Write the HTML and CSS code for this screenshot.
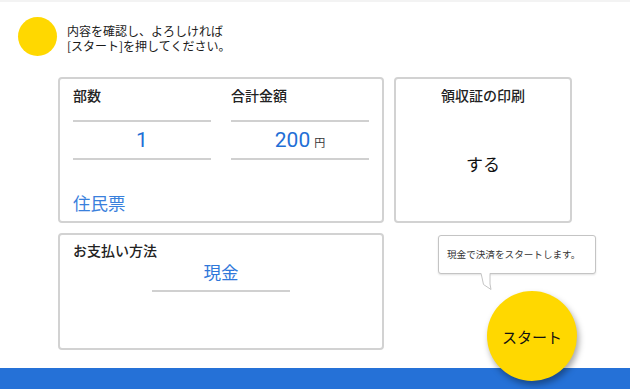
FILE: index.html
```html
<!DOCTYPE html>
<html lang="ja">
<head>
    <meta charset="UTF-8">
    <meta name="viewport" content="width=device-width, initial-scale=1.0">
    <title>確認</title>
    <link rel="stylesheet" href="styles.css">
</head>
<body>
    <div class="header">
        <div class="dot"></div>
        <p class="guide">内容を確認し、よろしければ<br>[スタート]を押してください。</p>
    </div>

    <div class="main">
        <div class="card card-order">
            <div class="field">
                <div class="label">部数</div>
                <div class="value">1</div>
            </div>
            <div class="field">
                <div class="label">合計金額</div>
                <div class="value">200<span class="unit">円</span></div>
            </div>
            <div class="doc-name">住民票</div>
        </div>

        <div class="card card-receipt">
            <div class="label">領収証の印刷</div>
            <div class="receipt-value">する</div>
        </div>

        <div class="card card-pay">
            <div class="label">お支払い方法</div>
            <div class="pay-value">現金</div>
        </div>

        <div class="action">
            <div class="bubble">
                現金で決済をスタートします。
                <svg class="tail" width="14" height="18" viewBox="0 0 14 18">
                    <path d="M1 0 L3.5 11.5 L11 16.5 L10 11 L10 0" fill="#fff" stroke="#c4c4c4" stroke-width="1"/>
                    <rect x="1.6" y="0" width="7.8" height="1.2" fill="#fff"/>
                </svg>
            </div>
            <button class="start-btn">スタート</button>
        </div>
    </div>

    <div class="footer"></div>
</body>
</html>
```

FILE: styles.css
```css
* {
    box-sizing: border-box;
    margin: 0;
    padding: 0;
}

body {
    width: 630px;
    height: 389px;
    overflow: hidden;
    background-color: #fff;
    color: #222;
    font-family: 'Noto Sans CJK JP', 'Noto Sans', sans-serif;
}

.header {
    display: flex;
    align-items: flex-start;
    gap: 10px;
    padding: 17px 0 0 18px;
    height: 77px;
    border-top: 2px solid #f3f3f3;
}

.dot {
    width: 39px;
    height: 39px;
    border-radius: 50%;
    background-color: #ffd800;
    margin-top: -2px;
}

.guide {
    font-size: 12px;
    line-height: 15px;
    margin-top: 4px;
    color: #1a1a1a;
}

.main {
    display: grid;
    grid-template-columns: 326px 178px;
    grid-template-rows: 146px 117px;
    gap: 10px;
    padding-left: 58px;
}

.card {
    border: 2px solid #d2d2d2;
    border-radius: 4px;
    background-color: #fff;
}

.label {
    font-size: 14px;
    line-height: 20px;
    font-weight: 500;
    color: #222;
}

.card-order {
    display: grid;
    grid-template-columns: 138px 138px;
    column-gap: 20px;
    align-content: start;
    padding: 6px 13px 0;
}

.field .label {
    margin-bottom: 15px;
}

.value {
    height: 40px;
    border-top: 2px solid #d0d0d0;
    border-bottom: 2px solid #d0d0d0;
    display: flex;
    align-items: center;
    justify-content: center;
    font-family: 'Roboto', 'Noto Sans CJK JP', sans-serif;
    font-size: 21px;
    color: #1f6fd6;
}

.unit {
    font-family: 'Noto Sans CJK JP', sans-serif;
    font-size: 11px;
    color: #333;
    margin-left: 4px;
    margin-top: 4px;
}

.doc-name {
    grid-column: span 2;
    margin-top: 31px;
    font-size: 17.5px;
    line-height: 24px;
    color: #3a80dc;
}

.card-receipt {
    display: flex;
    flex-direction: column;
    align-items: center;
    padding-top: 6px;
}

.receipt-value {
    flex: 1;
    display: flex;
    align-items: center;
    font-size: 17px;
    color: #111;
}

.card-pay {
    display: flex;
    flex-direction: column;
    padding: 5px 13px 0;
}

.pay-value {
    align-self: center;
    width: 138px;
    text-align: center;
    font-size: 17.5px;
    line-height: 24px;
    color: #2f78da;
    padding-bottom: 6px;
    border-bottom: 2px solid #d0d0d0;
}

.action {
    display: flex;
    flex-direction: column;
    align-items: flex-start;
}

.bubble {
    position: relative;
    margin: 2px 0 0 44px;
    width: 158px;
    height: 39px;
    flex-shrink: 0;
    border: 1px solid #c4c4c4;
    border-radius: 3px;
    background-color: #fff;
    box-shadow: 0 1px 2px rgba(0, 0, 0, 0.12);
    padding-left: 8px;
    font-size: 9.6px;
    line-height: 37px;
    color: #333;
    white-space: nowrap;
}

.tail {
    position: absolute;
    left: 41px;
    top: 37px;
}

.start-btn {
    position: relative;
    z-index: 1;
    flex-shrink: 0;
    margin: 17px 0 0 93px;
    width: 90px;
    height: 90px;
    border: none;
    border-radius: 50%;
    background-color: #ffd800;
    box-shadow: 2px 4px 6px rgba(0, 0, 0, 0.35);
    font-family: 'Noto Sans CJK JP', sans-serif;
    font-size: 15px;
    color: #111;
    cursor: pointer;
}

.footer {
    margin-top: 18px;
    height: 21px;
    background-color: #2571d7;
}
```
